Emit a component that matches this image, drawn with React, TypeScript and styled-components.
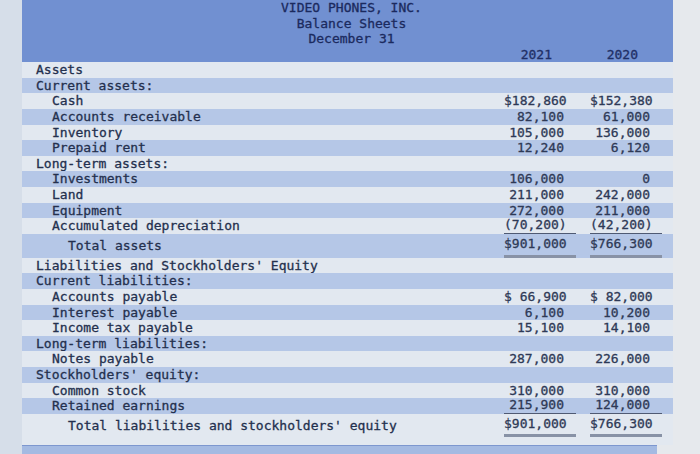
import React from "react";
import styled, { createGlobalStyle } from "styled-components";

const Global = createGlobalStyle`
  html, body { margin: 0; padding: 0; }
  body {
    width: 700px;
    height: 454px;
    overflow: hidden;
    background: linear-gradient(to right, #d6dee9 22px, #e6e9ed 22px);
    font-family: "DejaVu Sans Mono", "Liberation Mono", monospace;
    font-size: 13px;
    -webkit-text-stroke: 0.3px currentColor;
  }
`;

const Sheet = styled.div`
  margin-left: 22px;
  width: 651px;
  display: flex;
  flex-direction: column;
`;

const Header = styled.header`
  background: #7190d1;
  color: #1b2a5e;
  height: 62px;
  display: flex;
  flex-direction: column;
`;

const Title = styled.div`
  height: 47px;
  text-align: center;
  line-height: 15.5px;
  white-space: pre;
  padding-left: 8px;
`;

const Grid = styled.div<{ $h: number }>`
  display: grid;
  grid-template-columns: 1fr 72px 72px;
  column-gap: 14px;
  padding-right: 11px;
  height: ${(p) => p.$h}px;
  align-items: stretch;
`;

const YearCell = styled.div`
  text-align: right;
  padding-right: 24px;
  line-height: 15px;
  color: #1f2f66;
`;

const Band = styled(Grid)<{ $band: "light" | "blue" }>`
  background: ${(p) => (p.$band === "blue" ? "#b5c7e7" : "#e2e8f0")};
  color: #24304e;
`;

const Label = styled.div<{ $indent: number; $h: number }>`
  padding-left: ${(p) => 14 + p.$indent * 16}px;
  line-height: ${(p) => p.$h}px;
  white-space: pre;
`;

const Amount = styled.div<{ $h: number; $rule?: "thin" | "thick" }>`
  text-align: right;
  padding-right: 12px;
  white-space: pre;
  box-sizing: border-box;
  line-height: ${(p) => (p.$rule === "thick" ? p.$h - 3 : p.$rule === "thin" ? p.$h - 1 : p.$h)}px;
  color: #2e3956;
  border-bottom: ${(p) =>
    p.$rule === "thick" ? "3px solid #8892a6" : p.$rule === "thin" ? "1px solid #4f5a73" : "none"};
`;

const Spacer = styled.div`
  height: 8px;
  background: #e2e8f0;
`;

const Footer = styled.footer`
  height: 9px;
  background: #a4bae2;
  border-top: 1px solid #7d97cf;
  box-sizing: border-box;
  margin-right: 16px;
`;

type Line = {
  label: string;
  indent: number;
  a?: string;
  b?: string;
  rule?: "thin" | "thick";
  h?: number;
};

const R = 15.65;

const lines: Line[] = [
  { label: "Assets", indent: 0 },
  { label: "Current assets:", indent: 0 },
  { label: "Cash", indent: 1, a: "$182,860", b: "$152,380" },
  { label: "Accounts receivable", indent: 1, a: "82,100", b: "61,000" },
  { label: "Inventory", indent: 1, a: "105,000", b: "136,000" },
  { label: "Prepaid rent", indent: 1, a: "12,240", b: "6,120" },
  { label: "Long-term assets:", indent: 0 },
  { label: "Investments", indent: 1, a: "106,000", b: "0" },
  { label: "Land", indent: 1, a: "211,000", b: "242,000" },
  { label: "Equipment", indent: 1, a: "272,000", b: "211,000" },
  { label: "Accumulated depreciation", indent: 1, a: "(70,200)", b: "(42,200)", rule: "thin" },
  { label: "Total assets", indent: 2, a: "$901,000", b: "$766,300", rule: "thick", h: 23.6 },
  { label: "Liabilities and Stockholders' Equity", indent: 0 },
  { label: "Current liabilities:", indent: 0 },
  { label: "Accounts payable", indent: 1, a: "$ 66,900", b: "$ 82,000" },
  { label: "Interest payable", indent: 1, a: "6,100", b: "10,200" },
  { label: "Income tax payable", indent: 1, a: "15,100", b: "14,100" },
  { label: "Long-term liabilities:", indent: 0 },
  { label: "Notes payable", indent: 1, a: "287,000", b: "226,000" },
  { label: "Stockholders' equity:", indent: 0 },
  { label: "Common stock", indent: 1, a: "310,000", b: "310,000" },
  { label: "Retained earnings", indent: 1, a: "215,900", b: "124,000", rule: "thin" },
  { label: "Total liabilities and stockholders' equity", indent: 2, a: "$901,000", b: "$766,300", rule: "thick", h: 23 },
];

export default function App() {
  return (
    <>
      <Global />
      <Sheet>
        <Header>
          <Title>{"VIDEO PHONES, INC.\nBalance Sheets\nDecember 31"}</Title>
          <Grid $h={15}>
            <div />
            <YearCell>2021</YearCell>
            <YearCell>2020</YearCell>
          </Grid>
        </Header>
        {lines.map((l, i) => {
          const h = l.h ?? R;
          return (
            <Band key={l.label} $h={h} $band={i % 2 === 0 ? "light" : "blue"}>
              <Label $indent={l.indent} $h={h}>{l.label}</Label>
              <Amount $h={h} $rule={l.a ? l.rule : undefined}>{l.a ?? ""}</Amount>
              <Amount $h={h} $rule={l.b ? l.rule : undefined}>{l.b ?? ""}</Amount>
            </Band>
          );
        })}
        <Spacer />
        <Footer />
      </Sheet>
    </>
  );
}
